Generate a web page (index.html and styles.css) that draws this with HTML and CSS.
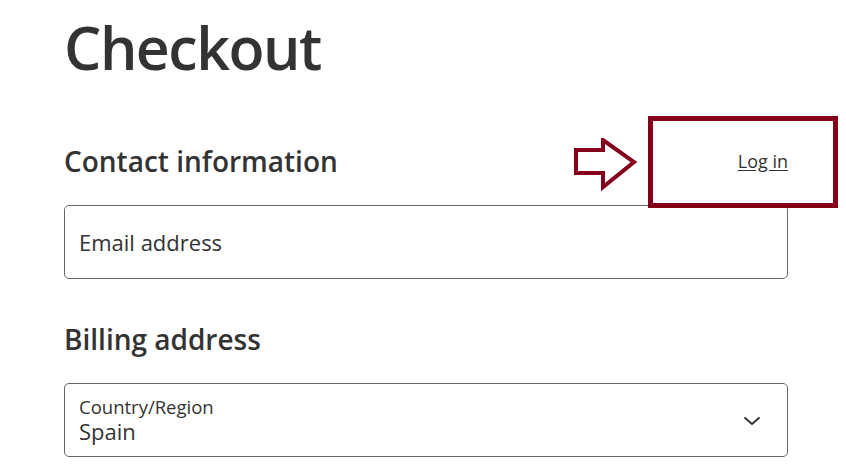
FILE: index.html
```html
<!DOCTYPE html>
<html lang="en">
<head>
    <meta charset="UTF-8">
    <meta name="viewport" content="width=device-width, initial-scale=1.0">
    <title>Checkout</title>
    <link rel="stylesheet" href="styles.css">
</head>
<body>

    <!-- Checkout form -->
    <main class="checkout">
        <h1>Checkout</h1>

        <section class="section">
            <div class="section-head">
                <h2>Contact information</h2>
                <a href="#" class="login-link">Log in</a>

                <!-- highlight around the login link -->
                <svg class="hint-arrow" width="66" height="56" viewBox="0 0 66 56">
                    <path d="M2 12 H29 V2 L60 24 L29 49 V35 H2 Z" fill="none" stroke="#85001b" stroke-width="4" stroke-linejoin="miter"/>
                </svg>
                <div class="hint-box"></div>
            </div>

            <div class="field">
                <input type="email" placeholder="Email address">
            </div>
        </section>

        <section class="section">
            <div class="section-head">
                <h2>Billing address</h2>
            </div>

            <div class="field select-field">
                <span class="field-label">Country/Region</span>
                <span class="field-value">Spain</span>
                <svg class="chevron" width="18" height="10" viewBox="0 0 18 10">
                    <path d="M1.5 1.5 L9 8 L16.5 1.5" fill="none" stroke="#333" stroke-width="2"/>
                </svg>
            </div>
        </section>
    </main>

</body>
</html>
```

FILE: styles.css
```css
/* Global Styles */
* {
    margin: 0;
    padding: 0;
    box-sizing: border-box;
}

body {
    font-family: 'Segoe UI', 'Open Sans', sans-serif;
    background-color: #fff;
    color: #333;
}

.checkout {
    width: 788px;
    padding: 0 0 0 64px;
}

.checkout h1 {
    font-size: 59px;
    font-weight: 600;
    line-height: 1;
    padding-top: 18px;
    letter-spacing: -1.5px;
}

.section {
    margin-top: 66px;
}

.section + .section {
    margin-top: 42px;
}

.section-head {
    position: relative;
    display: flex;
    justify-content: space-between;
    align-items: center;
    height: 36px;
    margin-bottom: 26px;
}

.section-head h2 {
    font-size: 28px;
    font-weight: 600;
}

.login-link {
    color: #333;
    font-size: 18px;
    text-decoration: underline;
    text-underline-offset: 2px;
}

/* annotation overlay */
.hint-arrow {
    position: absolute;
    left: 510px;
    top: -5px;
}

.hint-box {
    position: absolute;
    left: 584px;
    top: -27px;
    width: 190px;
    height: 92px;
    border: 5px solid #85001b;
}

.field {
    border: 1px solid #666;
    border-radius: 5px;
    height: 74px;
}

.field input {
    width: 100%;
    height: 100%;
    border: none;
    background: transparent;
    font-family: inherit;
    font-size: 22px;
    padding: 0 14px;
    color: #333;
    outline: none;
}

.field input::placeholder {
    color: #333;
}

.select-field {
    position: relative;
    display: flex;
    flex-direction: column;
    justify-content: center;
    padding: 2px 14px 0;
}

.field-label {
    font-size: 18.5px;
    line-height: 1.2;
}

.field-value {
    font-size: 22px;
    line-height: 1.25;
}

.chevron {
    position: absolute;
    right: 26px;
    top: 32px;
}
```
